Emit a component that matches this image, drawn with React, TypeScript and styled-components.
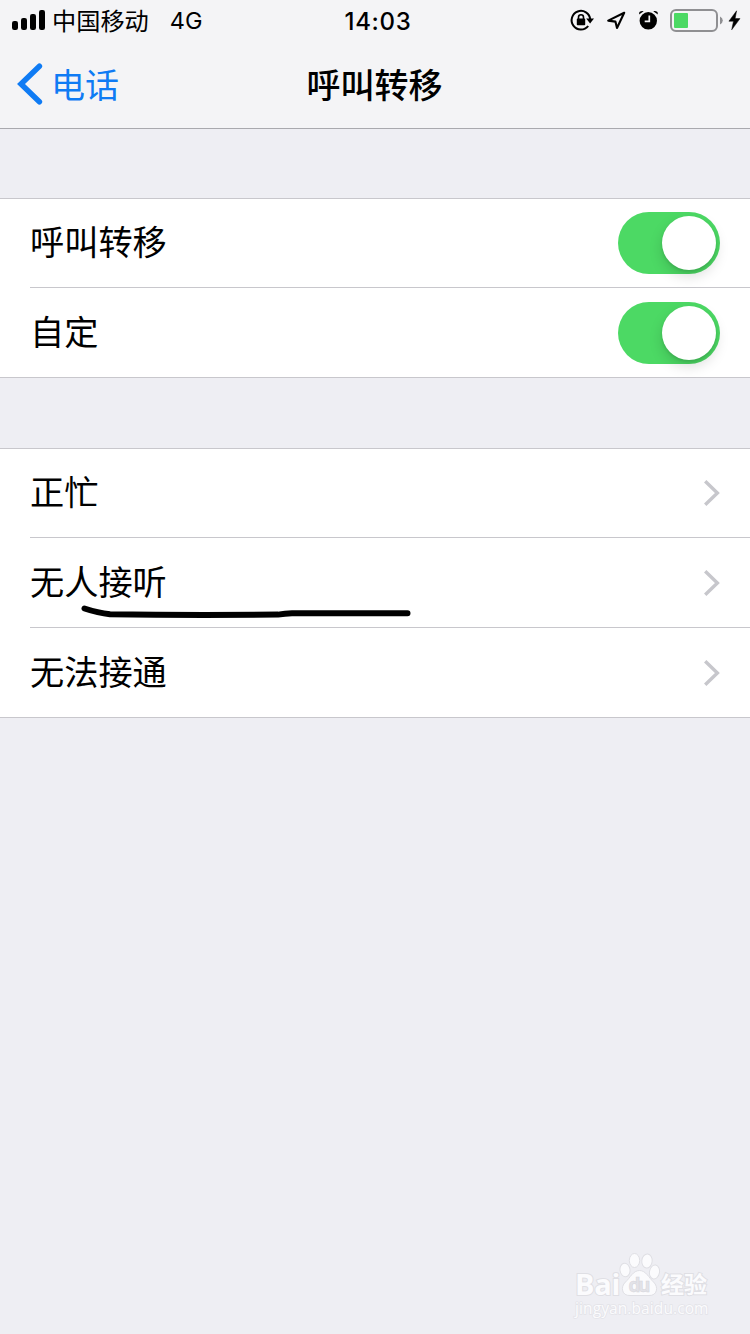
import React from "react";
import styled, { createGlobalStyle, css } from "styled-components";

const GlobalStyle = createGlobalStyle`
  *, *::before, *::after { box-sizing: border-box; }
  body {
    margin: 0;
    background: #eeeef3;
    color: #000;
    font-family: Inter, "Noto Sans CJK SC", sans-serif;
  }
`;

const Screen = styled.div`
  position: relative;
  width: 750px;
  height: 1334px;
  overflow: hidden;
  background: #eeeef3;
`;

const Header = styled.header`
  height: 129px;
  background: #f4f4f6;
  border-bottom: 1px solid #a9a9ae;
`;

const StatusBar = styled.div`
  display: grid;
  grid-template-columns: 1fr auto 1fr;
  height: 40px;
  align-items: center;
  padding: 0 9px 0 12px;
`;

const Carrier = styled.div`
  display: flex;
  align-items: center;
  white-space: nowrap;
  font-size: 24px;
  line-height: 40px;
`;

const CarrierName = styled.span`
  margin-left: 7px;
  font-family: "Noto Sans CJK SC", sans-serif;
  font-size: 24.2px;
  line-height: 40px;
`;

const Network = styled.span`
  margin-left: 21px;
  padding-top: 2px;
  font-weight: 400;
  font-size: 23.5px;
  line-height: 38px;
`;

const Clock = styled.time`
  padding: 3px 0 0 3px;
  font-size: 24px;
  line-height: 37px;
  font-weight: 550;
  letter-spacing: 0.7px;
`;

const StatusIcons = styled.div`
  display: flex;
  justify-content: flex-end;
`;

const NavBar = styled.nav`
  display: grid;
  grid-template-columns: 1fr auto 1fr;
  align-items: center;
  height: 88px;
  padding: 0 18px 0 17px;
  font-family: "Noto Sans CJK SC", sans-serif;
  font-size: 34px;
  line-height: 50px;
`;

const BackButton = styled.a`
  display: flex;
  align-items: center;
  gap: 8px;
  color: #0f7bf4;
`;

const BackLabel = styled.span`
  padding-bottom: 1px;
`;

const Title = styled.h1`
  margin: 0;
  padding-bottom: 1px;
  font-size: 34px;
  font-weight: 500;
`;

const Group = styled.section<{ $gap: number }>`
  margin-top: ${(p) => p.$gap}px;
  padding-left: 30px;
  background: #fff;
  border-top: 1px solid #c8c7cc;
  border-bottom: 1px solid #c8c7cc;
`;

const Row = styled.div`
  display: flex;
  align-items: center;
  justify-content: space-between;
  height: 90px;
  padding-right: 30px;
  border-bottom: 1px solid #c8c7cc;

  &:first-child { height: 89px; }
  &:last-child { height: 89px; border-bottom: 0; }
`;

const Label = styled.span`
  position: relative;
  padding-bottom: 6px;
  font-family: "Noto Sans CJK SC", sans-serif;
  font-size: 34.2px;
  line-height: 50px;
`;

const Stroke = styled.svg`
  position: absolute;
  left: 50px;
  top: 48px;
  pointer-events: none;
`;

const Track = styled.span<{ $on: boolean }>`
  display: flex;
  justify-content: ${(p) => (p.$on ? "flex-end" : "flex-start")};
  width: 102px;
  height: 62px;
  padding: 4px;
  border-radius: 31px;
  background: ${(p) => (p.$on ? "#4cd964" : "#e5e5ea")};
`;

const Knob = styled.span`
  width: 54px;
  height: 54px;
  border-radius: 50%;
  background: #fff;
  box-shadow: 0 6px 14px rgba(0, 0, 0, 0.15), 0 2px 3px rgba(0, 0, 0, 0.1);
`;

const Watermark = styled.div`
  position: absolute;
  left: 575px;
  top: 1252px;
  width: 136px;
  color: #fbfbfd;
`;

const outlined = css`
  -webkit-text-stroke: 2px #dfdfe4;
  paint-order: stroke fill;
`;

const Brand = styled.div`
  display: flex;
  align-items: flex-end;
  height: 45px;
`;

const BrandLatin = styled.span`
  ${outlined}
  width: 44px;
  font: 700 29px/27px "Open Sans", sans-serif;
  letter-spacing: -0.2px;
`;

const BrandHan = styled.span`
  ${outlined}
  font: 700 23px/28px "Noto Sans CJK SC", sans-serif;
  white-space: nowrap;
`;

const Site = styled.div`
  margin-top: 3px;
  -webkit-text-stroke: 1.5px #e3e3e8;
  paint-order: stroke fill;
  font: 400 15.5px/16px "Open Sans", sans-serif;
  letter-spacing: 0.1px;
  white-space: nowrap;
`;

const Signal = () => (
  <svg width="33" height="20" viewBox="0 0 33 20">
    <rect x="0" y="11" width="6" height="9" rx="2.2" />
    <rect x="9" y="8" width="6" height="12" rx="2.2" />
    <rect x="18" y="4" width="6" height="16" rx="2.2" />
    <rect x="27" y="0" width="6" height="20" rx="2.2" />
  </svg>
);

const StatusGlyphs = () => (
  <svg width="172" height="40" viewBox="569 0 172 40" fill="none">
    <path d="M588.2 26A9.3 9.3 0 1 1 590.2 19.5" stroke="#000" strokeWidth="2" />
    <path d="M586.2 18.4h7.8l-3.9 5z" fill="#000" />
    <rect x="576.8" y="18.6" width="8.4" height="6.6" rx="0.8" fill="#000" />
    <path d="M578.5 19v-1.8a2.5 2.5 0 0 1 5 0V19" stroke="#000" strokeWidth="1.6" />
    <path d="M624.2 12.8L608.2 20.6L615.4 21.6L617 28Z" stroke="#000" strokeWidth="2.1" strokeLinejoin="round" />
    <circle cx="648.3" cy="20.8" r="8.7" fill="#000" />
    <path d="M649.3 15.5v5.9h-4.6" stroke="#f4f4f6" strokeWidth="1.7" />
    <path d="M639 14.6l0.4-2.6q2-1.4 4.3-0.8zM657.9 14.6l-0.4-2.6q-2-1.4-4.3-0.8z" fill="#000" />
    <rect x="671" y="10" width="46" height="21" rx="5" stroke="#8f8f92" strokeWidth="2" />
    <rect x="674" y="13" width="14" height="15" rx="1" fill="#4cd964" />
    <path d="M720 16.5q2.8 1.5 2.8 4t-2.8 4z" fill="#8f8f92" />
    <path d="M736.6 10.8L728.9 21.2h4.6L731.7 29.8L740 18.6h-4.9z" fill="#000" stroke="#000" strokeWidth="0.5" />
  </svg>
);

const BackChevron = () => (
  <svg width="26" height="42" viewBox="0 0 26 42" fill="none">
    <path d="M22.4 3.2L4 21L22.4 38.8" stroke="#0f7bf4" strokeWidth="5.5" strokeLinecap="round" strokeLinejoin="miter" />
  </svg>
);

const Disclosure = () => (
  <svg width="17" height="26" viewBox="0 0 17 26" fill="none">
    <path d="M2.2 1.2L14.4 13L2.2 24.8" stroke="#c7c7cc" strokeWidth="3.4" />
  </svg>
);

const Paw = () => (
  <svg width="42" height="45" viewBox="0 0 42 45" fill="#fbfbfd" stroke="#dfdfe4">
    <ellipse cx="6" cy="18" rx="5" ry="6.8" transform="rotate(-8 6 18)" />
    <ellipse cx="15.5" cy="8.5" rx="5.2" ry="7" />
    <ellipse cx="28" cy="9" rx="5.2" ry="7" transform="rotate(6 28 9)" />
    <ellipse cx="35.5" cy="20" rx="5" ry="7" transform="rotate(10 35.5 20)" />
    <path d="M20.5 18.5C14 18.5 11 26 6.5 30C1 35 3 44 11 43.5H30C38 44 40 35 34.5 30C30 26 27 18.5 20.5 18.5Z" />
    <text x="9.5" y="40" fontFamily="Open Sans, sans-serif" fontWeight="700" fontSize="19" fill="#e3e3e8" stroke="#d5d5db" strokeWidth="0.5" textLength="22">du</text>
  </svg>
);

const Switch = ({ on }: { on: boolean }) => (
  <Track role="switch" aria-checked={on} $on={on}>
    <Knob />
  </Track>
);

const toggles = ["呼叫转移", "自定"];
const conditions = [
  { name: "正忙" },
  { name: "无人接听", marked: true },
  { name: "无法接通" },
];

export default function App() {
  return (
    <Screen>
      <GlobalStyle />
      <Header>
        <StatusBar>
          <Carrier>
            <Signal />
            <CarrierName>中国移动</CarrierName>
            <Network>4G</Network>
          </Carrier>
          <Clock>14:03</Clock>
          <StatusIcons>
            <StatusGlyphs />
          </StatusIcons>
        </StatusBar>
        <NavBar>
          <BackButton>
            <BackChevron />
            <BackLabel>电话</BackLabel>
          </BackButton>
          <Title>呼叫转移</Title>
        </NavBar>
      </Header>
      <Group $gap={69}>
        {toggles.map((name) => (
          <Row key={name}>
            <Label>{name}</Label>
            <Switch on />
          </Row>
        ))}
      </Group>
      <Group $gap={70}>
        {conditions.map(({ name, marked }) => (
          <Row key={name}>
            <Label>
              {name}
              {marked && (
                <Stroke width="332" height="16" viewBox="80 603 332 16" fill="none">
                  <path
                    d="M84.5 608.5Q98 613 110 614.3C160 615 230 615 278 614.6Q285 613.5 292 613.3H407.5"
                    stroke="#000"
                    strokeWidth="6"
                    strokeLinecap="round"
                  />
                </Stroke>
              )}
            </Label>
            <Disclosure />
          </Row>
        ))}
      </Group>
      <Watermark>
        <Brand>
          <BrandLatin>Bai</BrandLatin>
          <Paw />
          <BrandHan>经验</BrandHan>
        </Brand>
        <Site>jingyan.baidu.com</Site>
      </Watermark>
    </Screen>
  );
}
